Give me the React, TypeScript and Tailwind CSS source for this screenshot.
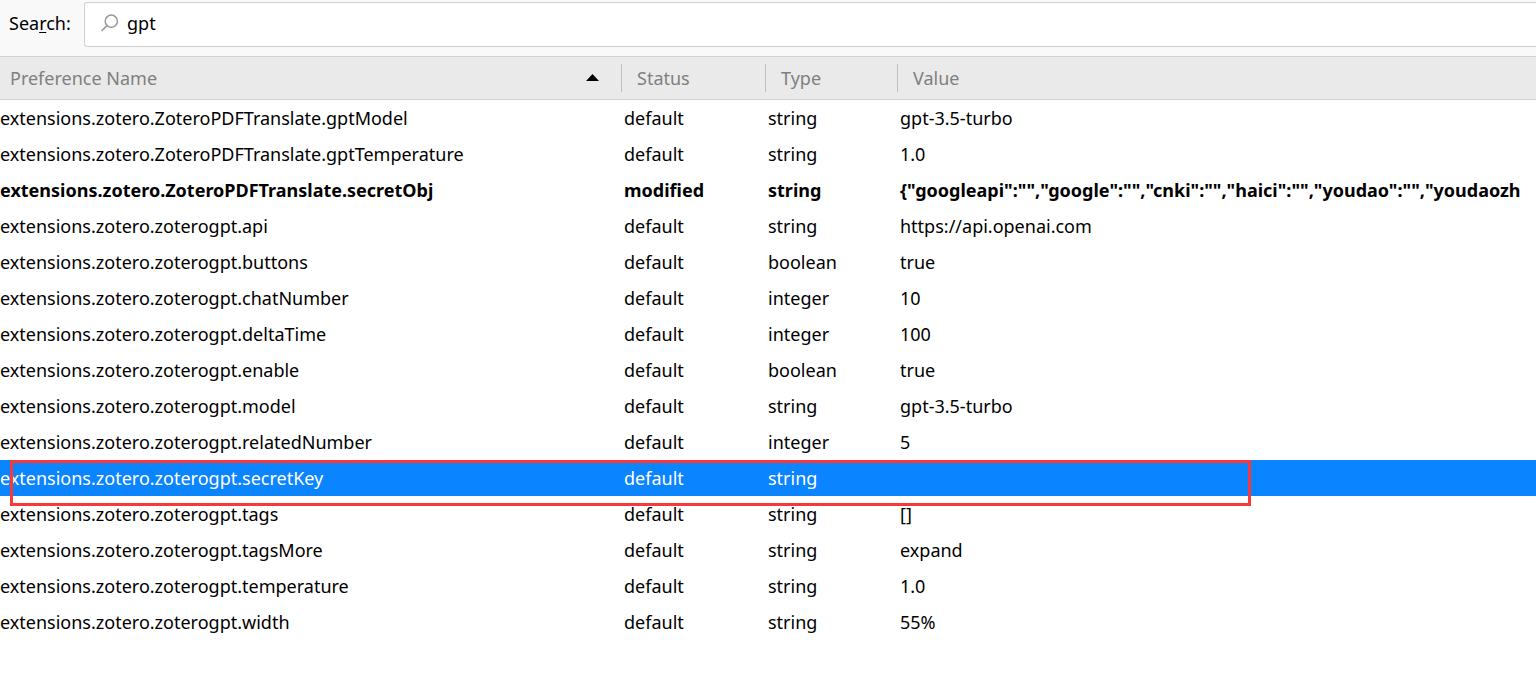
import clsx from 'clsx';

interface Preference {
  name: string;
  status: 'default' | 'modified';
  type: 'string' | 'boolean' | 'integer';
  value: string;
}

const SELECTED = 'extensions.zotero.zoterogpt.secretKey';

const preferences: Preference[] = [
  { name: 'extensions.zotero.ZoteroPDFTranslate.gptModel', status: 'default', type: 'string', value: 'gpt-3.5-turbo' },
  { name: 'extensions.zotero.ZoteroPDFTranslate.gptTemperature', status: 'default', type: 'string', value: '1.0' },
  {
    name: 'extensions.zotero.ZoteroPDFTranslate.secretObj',
    status: 'modified',
    type: 'string',
    value: '{"googleapi":"","google":"","cnki":"","haici":"","youdao":"","youdaozh',
  },
  { name: 'extensions.zotero.zoterogpt.api', status: 'default', type: 'string', value: 'https://api.openai.com' },
  { name: 'extensions.zotero.zoterogpt.buttons', status: 'default', type: 'boolean', value: 'true' },
  { name: 'extensions.zotero.zoterogpt.chatNumber', status: 'default', type: 'integer', value: '10' },
  { name: 'extensions.zotero.zoterogpt.deltaTime', status: 'default', type: 'integer', value: '100' },
  { name: 'extensions.zotero.zoterogpt.enable', status: 'default', type: 'boolean', value: 'true' },
  { name: 'extensions.zotero.zoterogpt.model', status: 'default', type: 'string', value: 'gpt-3.5-turbo' },
  { name: 'extensions.zotero.zoterogpt.relatedNumber', status: 'default', type: 'integer', value: '5' },
  { name: SELECTED, status: 'default', type: 'string', value: '' },
  { name: 'extensions.zotero.zoterogpt.tags', status: 'default', type: 'string', value: '[]' },
  { name: 'extensions.zotero.zoterogpt.tagsMore', status: 'default', type: 'string', value: 'expand' },
  { name: 'extensions.zotero.zoterogpt.temperature', status: 'default', type: 'string', value: '1.0' },
  { name: 'extensions.zotero.zoterogpt.width', status: 'default', type: 'string', value: '55%' },
];

function SearchBar() {
  return (
    <div className="flex items-start bg-[#f9f9f9] pt-[2px] pb-[9px] pl-[9px]">
      <label htmlFor="pref-search" className="w-[75px] shrink-0 leading-[43px]">
        Sea<span className="underline underline-offset-2">r</span>ch:
      </label>
      <div className="flex h-[45px] flex-1 items-center gap-2 rounded-l-[3px] border border-r-0 border-[#d0d0d4] bg-white pb-1 pl-4">
        <svg className="h-[18px] w-[18px] shrink-0" viewBox="0 0 18 18" fill="none" stroke="#999" strokeWidth="1.5">
          <circle cx="10.3" cy="7.2" r="6.1" />
          <path d="M6 11.6 0.6 17" />
        </svg>
        <input
          id="pref-search"
          type="text"
          defaultValue="gpt"
          className="h-full min-w-0 flex-1 bg-transparent outline-none"
        />
      </div>
    </div>
  );
}

function HeaderCell({ label, sorted }: { label: string; sorted?: boolean }) {
  return (
    <th scope="col" className="p-0 text-left font-normal" aria-sort={sorted ? 'ascending' : undefined}>
      <div
        className={clsx(
          'flex h-7 items-center justify-between',
          sorted ? 'pr-[22px] pl-[10px]' : 'border-l border-[#c0c0c0] pl-[15px]',
        )}
      >
        {label}
        {sorted && (
          <svg className="h-[9px] w-[13px]" viewBox="0 0 13 9" fill="#000">
            <path d="M0 7 6.5 0 13 7Z" />
          </svg>
        )}
      </div>
    </th>
  );
}

function PreferenceRow({ pref }: { pref: Preference }) {
  const selected = pref.name === SELECTED;

  return (
    <tr
      aria-selected={selected}
      className={clsx(
        'h-9',
        selected && 'relative bg-[#0a84ff] text-white',
        pref.status === 'modified' && 'font-bold',
      )}
    >
      <td className="p-0">
        {pref.name}
        {/* Red frame around the secret key row */}
        {selected && (
          <span className="pointer-events-none absolute top-0 right-[285px] left-[10px] h-[46px] border-3 border-[#fb3838]" />
        )}
      </td>
      <td className="py-0 pr-0 pl-[3px]">{pref.status}</td>
      <td className="py-0 pr-0 pl-[3px]">{pref.type}</td>
      <td className="overflow-hidden py-0 pr-0 pl-[3px]">{pref.value}</td>
    </tr>
  );
}

export default function App() {
  return (
    <div className="min-h-screen overflow-hidden bg-white font-['Noto_Sans','Open_Sans',sans-serif] text-[18px] leading-6 text-black">
      <SearchBar />
      <table className="w-full table-fixed border-collapse whitespace-nowrap">
        <colgroup>
          <col className="w-[621px]" />
          <col className="w-[144px]" />
          <col className="w-[132px]" />
          <col />
        </colgroup>
        <thead>
          <tr className="h-11 bg-[#eaeaea] text-[#808080] shadow-[inset_0_1px_0_#d2d2d4,inset_0_-1px_0_#d2d2d4]">
            <HeaderCell label="Preference Name" sorted />
            <HeaderCell label="Status" />
            <HeaderCell label="Type" />
            <HeaderCell label="Value" />
          </tr>
        </thead>
        <tbody>
          {preferences.map((pref) => (
            <PreferenceRow key={pref.name} pref={pref} />
          ))}
        </tbody>
      </table>
    </div>
  );
}
